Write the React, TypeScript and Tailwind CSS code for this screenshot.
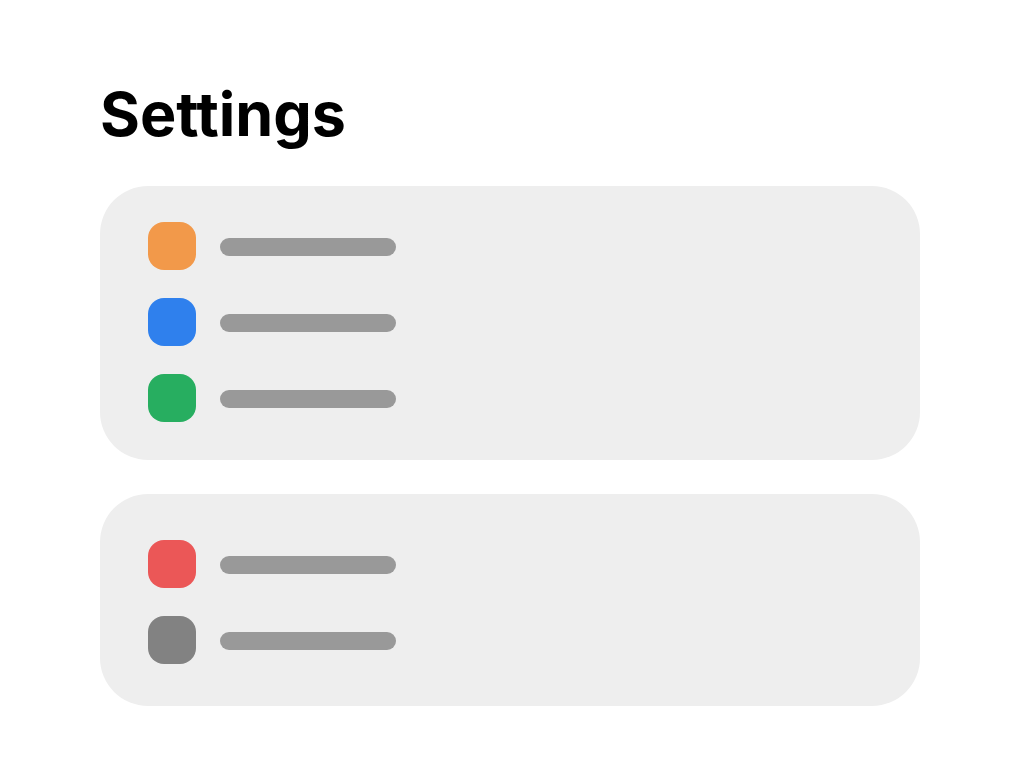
const groups = [
  {
    id: 'general',
    className: 'pt-9 pb-[38px]',
    rows: [
      { id: 'orange', color: 'bg-[#f2994a]' },
      { id: 'blue', color: 'bg-[#2f80ed]' },
      { id: 'green', color: 'bg-[#27ae60]' },
    ],
  },
  {
    id: 'advanced',
    className: 'pt-[46px] pb-[42px]',
    rows: [
      { id: 'red', color: 'bg-[#eb5757]' },
      { id: 'gray', color: 'bg-[#828282]' },
    ],
  },
];

function SettingsRow({ color }: { color: string }) {
  return (
    <li className="flex items-center gap-6">
      <span className={`size-12 shrink-0 rounded-2xl ${color}`} />
      <span className="mt-0.5 h-[18px] w-44 rounded-full bg-[#999999]" />
    </li>
  );
}

export default function App() {
  return (
    <main className="min-h-screen bg-white pt-[76px] pr-[104px] pb-[62px] pl-[100px] font-['Inter',sans-serif]">
      <h1 className="text-[61px] leading-[76px] font-bold text-black">Settings</h1>
      <div className="mt-[34px] flex flex-col gap-[34px]">
        {groups.map(group => (
          <ul key={group.id} className={`flex flex-col gap-7 rounded-[48px] bg-[#eeeeee] px-12 ${group.className}`}>
            {group.rows.map(row => (
              <SettingsRow key={row.id} color={row.color} />
            ))}
          </ul>
        ))}
      </div>
    </main>
  );
}
